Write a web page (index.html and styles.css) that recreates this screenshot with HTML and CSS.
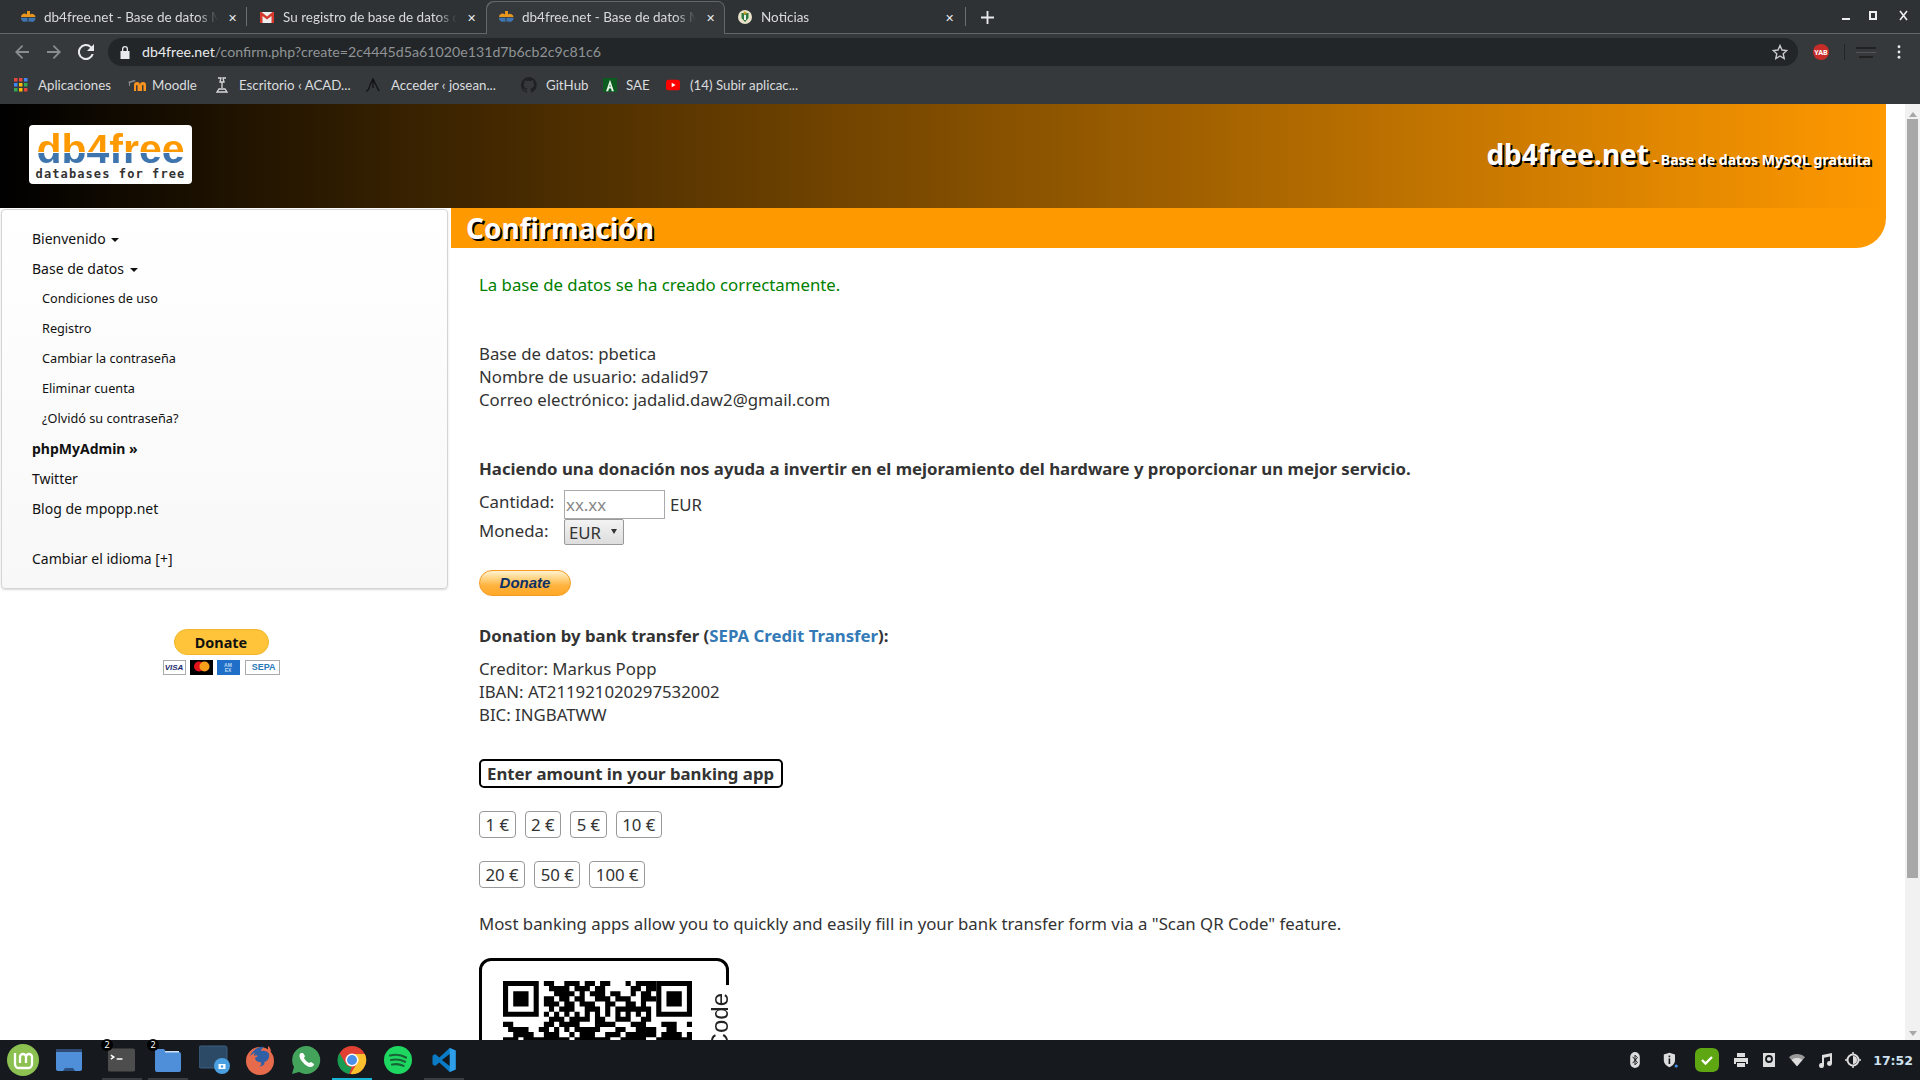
FILE: index.html
```html
<!DOCTYPE html>
<html lang="es">
<head>
<meta charset="utf-8">
<title>db4free.net - Base de datos MySQL gratuita</title>
<link rel="stylesheet" href="styles.css">
</head>
<body>
<div class="screen">
  <div class="tabstrip">
    <div class="tab">
      <svg class="fav" viewBox="0 0 16 16"><path d="M1 8a3.500 3.500 0 0 1 6-2.500V2h1.500v6zM8.500 8V2H10v3.500A3.500 3.500 0 0 1 15.500 8z" fill="#e8971e"/><path d="M1 8.800h6.500v4H6.300v-.6A3.500 3.500 0 0 1 1 8.800zM8.500 8.800h7a3.500 3.500 0 0 1-5.500 3.400v.6H8.500z" fill="#3f75ae"/></svg>
      <span class="tab-title">db4free.net - Base de datos M</span>
      <span class="tab-x">✕</span>
    </div>
    <div class="tab tab-sep">
      <svg class="fav" viewBox="0 0 16 16"><rect x="1" y="3" width="14" height="11" fill="#eee"/><path d="M1 3v11h2.500V7L8 10.500 12.500 7v7H15V3h-1.500L8 7.500 2.500 3z" fill="#d6382b"/></svg>
      <span class="tab-title">Su registro de base de datos c</span>
      <span class="tab-x">✕</span>
    </div>
    <div class="tab tab-active">
      <svg class="fav" viewBox="0 0 16 16"><path d="M1 8a3.500 3.500 0 0 1 6-2.500V2h1.500v6zM8.500 8V2H10v3.500A3.500 3.500 0 0 1 15.500 8z" fill="#e8971e"/><path d="M1 8.800h6.500v4H6.300v-.6A3.500 3.500 0 0 1 1 8.800zM8.500 8.800h7a3.500 3.500 0 0 1-5.500 3.400v.6H8.500z" fill="#3f75ae"/></svg>
      <span class="tab-title">db4free.net - Base de datos M</span>
      <span class="tab-x">✕</span>
    </div>
    <div class="tab tab-last">
      <svg class="fav" viewBox="0 0 16 16"><circle cx="8" cy="8" r="7" fill="#e7e2c8"/><path d="M4.500 4h7v5L8 13 4.500 9z" fill="#2c7a3d"/><circle cx="8" cy="4" r="1.500" fill="#c9a227"/><path d="M7 6h2v5H7z" fill="#eee"/></svg>
      <span class="tab-title">Noticias</span>
      <span class="tab-x">✕</span>
    </div>
    <svg class="newtab" viewBox="0 0 14 14"><path d="M6 0h2v6h6v2H8v6H6V8H0V6h6z" fill="#e8eaed"/></svg>
    <div class="winctl">
      <span class="win-min"></span>
      <span class="win-max"></span>
      <svg class="win-close" viewBox="0 0 9 11"><path d="M1 1l7 9M8 1l-7 9" stroke="#eee" stroke-width="1.600" fill="none"/></svg>
    </div>
  </div>

  <div class="toolbar">
    <svg class="nav-ico" viewBox="0 0 16 16"><path d="M15 7H4.500l4.700-4.800L8 1 1 8l7 7 1.200-1.200L4.500 9H15z" fill="#8a8d90"/></svg>
    <svg class="nav-ico" viewBox="0 0 16 16"><path d="M1 7h10.500L6.800 2.200 8 1l7 7-7 7-1.200-1.200L11.500 9H1z" fill="#8a8d90"/></svg>
    <svg class="nav-ico" viewBox="0 0 16 16"><path d="M13.600 2.400A8 8 0 1 0 15.700 10h-2.100a6 6 0 1 1-1.400-6.200L9 7h7V0z" fill="#e8eaed"/></svg>
    <div class="omnibox">
      <svg class="lock" viewBox="0 0 12 14"><path d="M3 6V4a3 3 0 0 1 6 0v2h1.500v8h-9V6zm1.300 0h3.400V4a1.700 1.700 0 0 0-3.400 0z" fill="#e8eaed"/></svg>
      <span class="url"><span class="url-host">db4free.net</span>/confirm.php?create=2c4445d5a61020e131d7b6cb2c9c81c6</span>
      <svg class="star" viewBox="0 0 16 16"><path d="M8 1.500l2 4.500 4.800.5-3.600 3.200 1 4.800L8 12l-4.200 2.500 1-4.800L1.200 6.500 6 6z" fill="none" stroke="#c8cacc" stroke-width="1.400"/></svg>
    </div>
    <div class="yab"><span>YAB</span></div>
    <div class="tool-sep"></div>
    <div class="profile"><span></span><span></span><span></span></div>
    <svg class="dots" viewBox="0 0 4 16"><circle cx="2" cy="2" r="1.600" fill="#e8eaed"/><circle cx="2" cy="8" r="1.600" fill="#e8eaed"/><circle cx="2" cy="14" r="1.600" fill="#e8eaed"/></svg>
  </div>

  <div class="bookmarks">
    <a class="bm bm-apps"><svg viewBox="0 0 14 14" class="bm-ico"><g><rect width="3.500" height="3.500" fill="#e8453c"/><rect x="5" width="3.500" height="3.500" fill="#e8453c"/><rect x="10" width="3.500" height="3.500" fill="#4285f4"/><rect y="5" width="3.500" height="3.500" fill="#4285f4"/><rect x="5" y="5" width="3.500" height="3.500" fill="#fbbc05"/><rect x="10" y="5" width="3.500" height="3.500" fill="#34a853"/><rect y="10" width="3.500" height="3.500" fill="#34a853"/><rect x="5" y="10" width="3.500" height="3.500" fill="#fbbc05"/><rect x="10" y="10" width="3.500" height="3.500" fill="#e8453c"/></g></svg>Aplicaciones</a>
    <a class="bm bm-moodle"><svg viewBox="0 0 18 14" class="bm-ico"><path d="M6 13V7a3 3 0 0 1 6 0v6H9.500V7.500a.8.8 0 0 0-1.500 0V13zM12 13V7a3 3 0 0 1 6 0v6h-2.500V7.500a.8.8 0 0 0-1.500 0V13z" fill="#f7931e"/><path d="M0 4l6-2 2 1-6 2v3H1V5z" fill="#8a8d90"/></svg>Moodle</a>
    <a class="bm bm-acad"><svg viewBox="0 0 14 16" class="bm-ico"><path d="M3 1h3l-1 4h4L8 1h3M7 5v6M2 15h10l-2-3H4z" stroke="#d8d8d8" stroke-width="1.300" fill="none"/></svg>Escritorio ‹ ACAD...</a>
    <a class="bm bm-acc"><svg viewBox="0 0 16 16" class="bm-ico"><path d="M1 14c3 0 3-3 4-6l3-6 3 6 3 6M8 2v9" stroke="#111" stroke-width="1.300" fill="none"/></svg>Acceder ‹ josean...</a>
    <a class="bm bm-git"><svg viewBox="0 0 16 16" class="bm-ico"><path d="M8 0a8 8 0 0 0-2.500 15.600c.4.100.5-.2.500-.4v-1.400c-2.200.5-2.700-1-2.700-1-.4-.9-.9-1.200-.9-1.200-.7-.5.100-.5.100-.5.800.100 1.200.8 1.200.8.700 1.200 1.900.9 2.300.7.100-.5.300-.9.500-1.100-1.800-.2-3.700-.9-3.700-4 0-.9.300-1.600.8-2.100-.1-.2-.4-1 .1-2.100 0 0 .7-.2 2.200.8a7.600 7.600 0 0 1 4 0c1.500-1 2.200-.8 2.200-.8.400 1.100.2 1.900.1 2.100.5.600.8 1.300.8 2.100 0 3.100-1.900 3.700-3.700 3.900.3.300.6.800.6 1.500v2.200c0 .2.100.5.600.4A8 8 0 0 0 8 0z" fill="#202124"/></svg>GitHub</a>
    <a class="bm bm-sae"><svg viewBox="0 0 16 16" class="bm-ico"><rect width="16" height="16" fill="#0c5c20"/><path d="M8 2l4.500 13H10l-.8-3H6.800L6 15H3.500zm0 5l-.7 3h1.400z" fill="#e9f4ea"/></svg>SAE</a>
    <a class="bm bm-yt"><svg viewBox="0 0 16 16" class="bm-ico"><rect y="2" width="16" height="12" rx="3" fill="#f00"/><path d="M6.500 5.500L11 8l-4.500 2.500z" fill="#fff"/></svg>(14) Subir aplicac...</a>
  </div>

  <div class="viewport">
    <div class="page">
      <header class="site-head">
        <div class="logo">
          <span class="logo-big">db4free</span>
          <span class="logo-small">databases for free</span>
        </div>
        <div class="site-title"><span class="site-name">db4free.net</span><span class="site-sub"> - Base de datos MySQL gratuita</span></div>
      </header>
      <div class="columns">
        <aside class="side">
          <nav class="menu">
            <a class="item">Bienvenido <i class="caret"></i></a>
            <a class="item">Base de datos <i class="caret"></i></a>
            <a class="item sub">Condiciones de uso</a>
            <a class="item sub">Registro</a>
            <a class="item sub">Cambiar la contraseña</a>
            <a class="item sub">Eliminar cuenta</a>
            <a class="item sub">¿Olvidó su contraseña?</a>
            <a class="item strong">phpMyAdmin »</a>
            <a class="item">Twitter</a>
            <a class="item">Blog de mpopp.net</a>
            <a class="item lang">Cambiar el idioma [+]</a>
          </nav>
          <div class="side-donate">
            <span class="pp-yellow">Donate</span>
            <div class="cards">
              <span class="card card-visa">VISA</span>
              <svg class="card-mc" viewBox="0 0 23 15"><rect width="23" height="15" fill="#000"/><circle cx="9" cy="6.500" r="5" fill="#e3131b"/><circle cx="14.500" cy="6.500" r="5" fill="#f79e1b"/></svg>
              <span class="card card-amex">AM<br>EX</span>
              <span class="card card-sepa">SEPA</span>
            </div>
          </div>
        </aside>
        <main class="content">
          <h2 class="bar">Confirmación</h2>
          <div class="inner">
            <p class="ok">La base de datos se ha creado correctamente.</p>
            <p class="gap">Base de datos: pbetica<br>Nombre de usuario: adalid97<br>Correo electrónico: jadalid.daw2@gmail.com</p>
            <p class="gap"><b>Haciendo una donación nos ayuda a invertir en el mejoramiento del hardware y proporcionar un mejor servicio.</b></p>
            <form class="amount">
              <label class="lbl">Cantidad:</label>
              <div class="field"><input class="inp" type="text" placeholder="xx.xx"><span class="cur">EUR</span></div>
              <label class="lbl">Moneda:</label>
              <div class="field"><div class="sel">EUR<i class="sel-arrow"></i></div></div>
            </form>
            <span class="pp-orange">Donate</span>
            <p class="bank-h"><b>Donation by bank transfer (<a class="link">SEPA Credit Transfer</a>):</b></p>
            <p class="bank">Creditor: Markus Popp<br>IBAN: AT211921020297532002<br>BIC: INGBATWW</p>
            <div class="enter"><b>Enter amount in your banking app</b></div>
            <div class="amts"><span class="amt">1 €</span><span class="amt">2 €</span><span class="amt">5 €</span><span class="amt">10 €</span></div>
            <div class="amts amts2"><span class="amt">20 €</span><span class="amt">50 €</span><span class="amt">100 €</span></div>
            <p class="scan">Most banking apps allow you to quickly and easily fill in your bank transfer form via a "Scan QR Code" feature.</p>
            <div class="qr">
              <svg class="qr-code" viewBox="0 0 37 37">
                <path fill-rule="evenodd" d="M0 0h7v7H0zM1 1v5h5V1zM2 2h3v3H2zM30 0h7v7h-7zM31 1v5h5V1zM32 2h3v3h-3z"/>
                <path stroke="#000" fill="none" d="M8 .5h2M12 .5h3M16 .5h2M19 .5h2M24 .5h1M26 .5h4M9 1.500h2M11 1.500h2M14 1.500h3M18 1.500h2M25 1.500h2M28 1.500h2M10 2.500h4M15 2.500h1M17 2.500h3M21 2.500h2M25 2.500h1M27 2.500h2M8 3.500h2M11 3.500h2M14 3.500h2M18 3.500h3M22 3.500h3M27 3.500h3M8 4.500h3M12 4.500h2M15 4.500h3M20 4.500h2M24 4.500h2M27 4.500h1M9 5.500h1M11 5.500h3M16 5.500h3M20 5.500h1M22 5.500h4M26 5.500h3M8 6.500h1M10 6.500h1M12 6.500h1M14 6.500h1M16 6.500h1M18 6.500h1M20 6.500h1M22 6.500h1M24 6.500h1M26 6.500h1M28 6.500h1M9 7.500h3M13 7.500h4M18 7.500h2M22 7.500h3M27 7.500h2M0 8.500h2M8 8.500h2M11 8.500h4M18 8.500h4M25 8.500h3M31 8.500h3M36 8.500h1M1 9.500h4M7 9.500h2M10 9.500h1M12 9.500h1M14 9.500h5M22 9.500h2M26 9.500h4M32 9.500h2M2 10.500h4M8 10.500h3M13 10.500h1M15 10.500h3M20 10.500h3M24 10.500h6M31 10.500h4M36 10.500h1M0 11.500h3M4 11.500h3M7 11.500h6M14 11.500h7M23 11.500h5M30 11.500h7"/>
              </svg>
              <span class="qr-label">QR Code</span>
            </div>
          </div>
        </main>
      </div>
    </div>
    <div class="scrollbar">
      <i class="sb-up"></i>
      <div class="sb-thumb"></div>
      <i class="sb-down"></i>
    </div>
  </div>

  <footer class="taskbar">
    <div class="task-left">
      <div class="ti"><svg viewBox="0 0 32 32" class="ti-32"><circle cx="16" cy="16" r="16" fill="#8cc152"/><path d="M8 9v11a4 4 0 0 0 4 4h9a4 4 0 0 0 4-4v-7a3 3 0 0 0-6 0v6M13 19v-6a3 3 0 0 1 6 0" fill="none" stroke="#fff" stroke-width="2.300"/></svg></div>
      <div class="ti"><svg viewBox="0 0 26 24" class="ti-26"><rect y="1" width="26" height="22" rx="2" fill="#4f8ed8"/><rect y="1" width="26" height="3" fill="#2e4a70"/><path d="M7 23l2-3h8l2 3z" fill="#2b4f80"/></svg></div>
      <div class="ti ti-term"><span class="badge">2</span><svg viewBox="0 0 28 24" class="ti-28"><rect width="28" height="24" rx="2" fill="#4d4d4d"/><path d="M3 7l3 2-3 2M9 11h6" stroke="#fff" stroke-width="1.500" fill="none"/></svg></div>
      <div class="ti ti-files"><span class="badge">2</span><svg viewBox="0 0 26 24" class="ti-26"><path d="M0 3a2 2 0 0 1 2-2h7l2 3h13a2 2 0 0 1 2 2v16a2 2 0 0 1-2 2H2a2 2 0 0 1-2-2z" fill="#4f8ed8"/><rect x="10" y="3" width="14" height="1.500" fill="#cfe0f5"/></svg></div>
      <div class="ti ti-shot"><svg viewBox="0 0 32 28" class="ti-32"><rect width="28" height="22" rx="2" fill="#2c4a66" stroke="#3c5f80"/><circle cx="23" cy="20" r="8" fill="#4a9fe0"/><rect x="19.500" y="18" width="7" height="5" fill="#fff"/><circle cx="23" cy="20.500" r="1.300" fill="#4a9fe0"/></svg></div>
      <div class="ti ti-fox"><svg viewBox="0 0 32 32" class="ti-32"><circle cx="16" cy="17" r="14" fill="#e66b4c"/><path d="M6 12c3-7 10-10 14-9-2 1-3 3-3 4 3-1 7 0 8 3 1 4-2 8-5 8 2 2-2 5-5 4 3 0 3-3 1-4-3 0-5-2-5-4l3-2c-1-1-3-1-4 0 0-1 0-2 1-3-2 0-3 2-5 3z" fill="#2f5fa5"/><path d="M24 2c2 1 3 4 3 6l-3-2z" fill="#e66b4c"/></svg></div>
      <div class="ti"><svg viewBox="0 0 30 30" class="ti-30"><path d="M15 1a14 14 0 0 0-12 21L1 29l7-2A14 14 0 1 0 15 1z" fill="#43a35a"/><path d="M10 8c-2 1-2 4 0 7s6 7 9 7 4-2 4-3l-3-2-2 1c-2-1-4-3-5-5l1-2-2-3z" fill="#fff"/></svg></div>
      <div class="ti"><svg viewBox="0 0 30 30" class="ti-30"><circle cx="15" cy="15" r="14" fill="#e24033"/><path d="M27.800 9H15a6 6 0 0 1 5.200 9L13.500 29A14 14 0 0 0 27.800 9z" fill="#fbc02d"/><path d="M2.500 8L9 19.500a6 6 0 0 0 6 2L12 29A14 14 0 0 1 2.500 8z" fill="#179c52"/><circle cx="15" cy="15" r="6.500" fill="#fff"/><circle cx="15" cy="15" r="5" fill="#4a8fe8"/></svg></div>
      <div class="ti"><svg viewBox="0 0 30 30" class="ti-30"><circle cx="15" cy="15" r="14" fill="#1ed760"/><path d="M7 10.500c6-1.500 11-1 16 2M8 15c5-1 9-.8 14 1.800M9 19.500c4-.8 8-.6 11.500 1.400" stroke="#14181c" stroke-opacity=".6" stroke-width="2.200" fill="none" stroke-linecap="round"/></svg></div>
      <div class="ti"><svg viewBox="0 0 28 28" class="ti-28"><path d="M20 0l7 3v22l-7 3L8 17l-5 4-3-2v-10l3-2 5 4z" fill="#0a7bc4"/><path d="M20 0l7 3v22l-7 3z" fill="#2e9ee8"/><path d="M20 7L11 14l9 7z" fill="#14181c"/></svg></div>
      <i class="run run-a"></i><i class="run run-b"></i><i class="run run-c"></i><i class="run run-d"></i>
    </div>
    <div class="tray">
      <svg class="tr tr-bt" viewBox="0 0 14 20"><rect width="12" height="20" x="1" rx="6" fill="#ddd"/><path d="M4 6l6 7-3 3V4l3 3-6 7" stroke="#14181c" stroke-width="1.200" fill="none"/></svg>
      <svg class="tr" viewBox="0 0 20 20"><path d="M8 1l7 2v7c0 5-4 8-7 9-3-1-7-4-7-9V3z" fill="#ddd"/><rect x="7" y="8" width="2" height="7" fill="#14181c"/><rect x="7" y="4.500" width="2" height="2" fill="#14181c"/><circle cx="16.500" cy="17.500" r="2" fill="#4a8fe8"/></svg>
      <svg class="tr tr-skype" viewBox="0 0 24 24"><path d="M7 0h10c5 0 7 3 7 7v10c0 5-3 7-7 7H7c-5 0-7-3-7-7V7c0-5 3-7 7-7z" fill="#5fa613"/><path d="M7 12l3.500 3.500L17 9" stroke="#fff" stroke-width="2.400" fill="none"/></svg>
      <svg class="tr" viewBox="0 0 16 14"><path d="M4 0h8v4H4zM1 5h14v6h-2V9H3v2H1zM4 10h8v4H4z" fill="#ddd"/></svg>
      <svg class="tr" viewBox="0 0 14 16"><rect width="12" height="14" x="1" y="1" fill="#ddd"/><circle cx="7" cy="7" r="3" fill="none" stroke="#14181c" stroke-width="1.800"/></svg>
      <svg class="tr" viewBox="0 0 18 14"><path d="M0 4C5-1 13-1 18 4l-9 10z" fill="#9a9a9a"/><path d="M3 7c3-3 9-3 12 0l-6 7z" fill="#ddd"/></svg>
      <svg class="tr" viewBox="0 0 16 16"><path d="M5 3l10-2v10.500a2.500 2.500 0 1 1-2-2.400V4.500L7 5.700v7.800a2.500 2.500 0 1 1-2-2.400z" fill="#ddd"/></svg>
      <svg class="tr" viewBox="0 0 16 16"><circle cx="8" cy="8" r="5.500" fill="none" stroke="#ddd" stroke-width="2"/><path d="M8 4a4 4 0 0 1 0 8z" fill="#ddd"/><path d="M8 0v2M8 14v2M0 8h2M14 8h2" stroke="#ddd" stroke-width="1.500"/></svg>
      <span class="clock">17:52</span>
    </div>
  </footer>
</div>
</body>
</html>
```

FILE: styles.css
```css
* { box-sizing: border-box; }
html, body { margin: 0; height: 100%; overflow: hidden; }
body { font-family: "Noto Sans", sans-serif; font-size: 16.800px; line-height: 23px; color: #333; background: #fff; }
svg { display: block; flex: none; }

.screen { display: flex; flex-direction: column; width: 1920px; height: 1080px; }

/* browser chrome */
.tabstrip { position: relative; display: flex; align-items: stretch; height: 34px; padding: 1px 0 0 8px; background: #2e3235; border-bottom: 1px solid #63676a; font-family: Lato, "Noto Sans", sans-serif; font-size: 13.500px; color: #d8dadc; }
.tab { display: flex; align-items: center; width: 239px; height: 32px; padding: 0 7px 0 12px; position: relative; }
.tab-sep::after { content: ""; position: absolute; left: -1px; top: 6px; bottom: 7px; width: 1px; background: #6a6e71; }
.tab-active { background: #35393c; box-shadow: inset 1px 1px 0 #63676a, inset -1px 0 0 #63676a; border-radius: 8px 8px 0 0; height: 33px; padding-bottom: 1px; }
.tab-last::after { content: ""; position: absolute; right: -2px; top: 6px; bottom: 7px; width: 1px; background: #6a6e71; }
.fav { width: 16px; height: 16px; margin-right: 8px; }
.tab-title { flex: 1; white-space: nowrap; overflow: hidden; -webkit-mask-image: linear-gradient(to right, #000 88%, transparent); mask-image: linear-gradient(to right, #000 88%, transparent); }
.tab-x { width: 16px; margin-left: 6px; font-size: 11px; text-align: center; color: #e8eaed; }
.newtab { width: 13px; height: 13px; margin: 10px 0 0 17px; }
.winctl { display: flex; align-items: center; gap: 19px; margin-left: auto; padding: 0 12px 3px 0; }
.win-min { width: 8px; height: 2px; margin-top: 6px; background: #eee; }
.win-max { width: 8px; height: 9px; border: 2px solid #eee; }
.win-close { width: 9px; height: 11px; margin-left: 3px; }

.toolbar { display: flex; align-items: center; height: 36px; background: #35393c; padding: 0 0 0 14px; }
.nav-ico { width: 16px; height: 16px; margin-right: 16px; }
.omnibox { display: flex; align-items: center; width: 1690px; height: 28px; margin-left: -2px; padding: 0 10px 0 11px; background: #232628; border-radius: 14px; }
.lock { width: 12px; height: 14px; }
.url { flex: 1; margin-left: 11px; padding-bottom: 2px; color: #8f9396; white-space: nowrap; font-family: Lato, "Noto Sans", sans-serif; font-size: 14.200px; }
.url-host { color: #e8eaed; }
.star { width: 16px; height: 16px; }
.yab { display: flex; align-items: center; justify-content: center; width: 16px; height: 16px; margin-left: 15px; border-radius: 50%; background: #c62d28; }
.yab span { color: #fff; font-size: 7px; font-weight: 700; }
.tool-sep { width: 1px; height: 16px; margin-left: 15px; background: #232628; }
.profile { display: flex; flex-direction: column; gap: 3px; width: 22px; margin-left: 10px; align-items: center; }
.profile span { display: block; width: 20px; height: 2px; background: #222; }
.profile span:nth-child(2) { height: 1px; background: #555; }
.profile span:last-child { width: 14px; }
.dots { width: 4px; height: 14px; margin-left: 20px; }

.bookmarks { display: flex; align-items: center; height: 34px; padding: 0 0 4px 14px; background: #35393c; font-family: Lato, "Noto Sans", sans-serif; font-size: 13.300px; color: #dadcde; }
.bm { display: flex; align-items: center; white-space: nowrap; }
.bm-ico { width: 14px; height: 14px; margin-right: 9px; }
.bm-apps .bm-ico { margin-right: 10px; }
.bm-apps { width: 114px; }
.bm-moodle { width: 86px; }
.bm-moodle .bm-ico { width: 18px; margin-right: 6px; }
.bm-acad { width: 151px; }
.bm-acad .bm-ico, .bm-acc .bm-ico, .bm-git .bm-ico { width: 16px; height: 16px; }
.bm-acad .bm-ico { margin-right: 9px; }
.bm-acc { width: 156px; }
.bm-acc .bm-ico { margin-right: 10px; }
.bm-git { width: 82px; }
.bm-sae { width: 63px; }
.bm-yt .bm-ico { margin-right: 10px; }

/* page */
.viewport { display: flex; flex: 1; min-height: 0; }
.page { flex: 1; min-width: 0; overflow: hidden; }
.site-head { display: flex; justify-content: space-between; height: 104px; margin-right: 19px; padding: 21px 15px 0 29px; background: linear-gradient(to right, #000, #f90); }
.logo { display: flex; flex-direction: column; align-items: center; width: 163px; height: 59px; padding-top: 5px; background: #fff; border-radius: 4px; }
.logo-big { font-family: "Liberation Sans", sans-serif; font-size: 41px; font-weight: 700; line-height: 38px; height: 38px; background: linear-gradient(to bottom, #f90 0, #f90 58%, #fff 58%, #fff 61%, #3e75ae 61%, #3e75ae 100%); -webkit-background-clip: text; background-clip: text; color: transparent; }
.logo-small { font-family: "DejaVu Sans Mono", monospace; font-size: 12px; font-weight: 700; line-height: 13px; letter-spacing: 1.100px; color: #333; white-space: nowrap; }
.site-title { color: #fff; padding-top: 15px; line-height: 23px; text-shadow: 2px 2px 0 #000; white-space: nowrap; }
.site-name { font-size: 28px; font-weight: 700; line-height: 1; }
.site-sub { font-size: 14.100px; font-weight: 700; }

.columns { display: flex; }
.side { width: 451px; flex: none; }
.menu { display: flex; flex-direction: column; width: 447px; margin: 1px 0 0 1px; padding: 13px 0 15px; background: linear-gradient(to bottom, #fff, #f8f8f8); border: 1px solid #d4d4d4; border-radius: 4px; box-shadow: 0 1px 2px rgba(0,0,0,.15); }
.item { display: flex; align-items: center; height: 30px; padding-left: 30px; font-size: 14px; color: #111; white-space: pre; }
.sub { padding-left: 40px; font-size: 12.700px; }
.strong { font-weight: 700; }
.lang { margin-top: 20px; }
.caret { display: inline-block; width: 0; height: 0; margin: 3px 0 0 2px; border-left: 4px solid transparent; border-right: 4px solid transparent; border-top: 4px solid #111; }
.side-donate { display: flex; flex-direction: column; align-items: center; margin-top: 40px; padding-right: 9px; }
.pp-yellow { display: flex; align-items: center; justify-content: center; width: 95px; height: 26px; background: #ffc439; border: 1px solid #f0b528; border-radius: 13px; font-size: 14.400px; font-weight: 700; color: #111; }
.cards { display: flex; gap: 4px; margin-top: 5px; }
.card { display: flex; align-items: center; justify-content: center; height: 15px; font-family: "Liberation Sans", sans-serif; font-size: 8px; font-weight: 700; line-height: 5px; }
.card-visa { width: 23px; background: #fff; border: 1px solid #aaa; color: #1a2a6c; font-style: italic; }
.card-mc { width: 23px; height: 15px; }
.card-amex { width: 23px; background: #1f6fc9; color: #bcd6f2; font-size: 5px; text-align: center; }
.card-sepa { width: 35px; margin-left: 1px; background: #fff; border: 1px solid #aaa; color: #2a7ab8; justify-content: flex-end; padding-right: 3px; font-size: 9px; }

.content { flex: 1; min-width: 0; margin-right: 19px; }
.bar { height: 40px; margin: 0; padding-left: 15px; background: #f90; border-radius: 0 0 30px 0; color: #fff; font-size: 28px; font-weight: 700; line-height: 41px; text-shadow: 2px 2px 0 #000; }
.inner { padding: 25px 0 0 28px; }
.inner p { margin: 0; }
.ok { color: #008000; }
.inner .gap { margin-top: 46px; }
.amount { display: grid; grid-template-columns: 85px 1fr; margin-top: 10px; }
.field { display: flex; align-items: center; }
.inp { width: 101px; height: 29px; padding: 1px; border: 1px solid #aaa; font: 16.800px "Noto Sans", sans-serif; color: #333; background: #fff; }
.inp::placeholder { color: #888; opacity: 1; }
.cur { margin-left: 5px; }
.sel { position: relative; width: 60px; height: 26px; padding-left: 4px; line-height: 26px; background: linear-gradient(to bottom, #f3f3f3, #ddd); border: 1px solid #999; border-radius: 2px; }
.sel-arrow { position: absolute; right: 6px; top: 9px; width: 0; height: 0; border-left: 3px solid transparent; border-right: 3px solid transparent; border-top: 5px solid #333; }
.pp-orange { display: block; width: 92px; height: 26px; margin-top: 25px; border: 1px solid #f59b25; border-radius: 13px; background: linear-gradient(to bottom, #fff3d0 0, #ffd07a 35%, #ffb340 60%, #ffa826 100%); font-family: "Liberation Sans", sans-serif; font-size: 15px; font-style: italic; font-weight: 700; line-height: 24px; text-align: center; color: #0c3166; }
.inner .bank-h { margin-top: 28px; }
.link { color: #337ab7; }
.inner .bank { margin-top: 10px; }
.enter { width: 304px; height: 29px; margin-top: 33px; padding-left: 6px; border: 2px solid #000; border-radius: 5px; line-height: 25px; white-space: nowrap; }
.amts { display: flex; gap: 9px; margin-top: 23px; }
.amt { height: 27px; padding: 0 5.500px; border: 1px solid #999; border-radius: 4px; line-height: 25px; white-space: nowrap; }
.inner .scan { margin-top: 24px; }
.qr { position: relative; width: 250px; height: 250px; margin-top: 23px; border: 3px solid #000; border-radius: 12px; }
.qr-code { width: 189px; height: 189px; margin: 20px 0 0 21px; }
.qr-label { position: absolute; right: -3px; top: 24px; padding: 8px 0; background: #fff; font-family: "Liberation Sans", sans-serif; font-size: 24px; line-height: 18px; color: #222; writing-mode: vertical-rl; transform: rotate(180deg); white-space: nowrap; }

.scrollbar { display: flex; flex-direction: column; align-items: center; width: 15px; padding: 8px 0 4px; background: #f1f1f1; }
.sb-up { width: 0; height: 0; border-left: 4px solid transparent; border-right: 4px solid transparent; border-bottom: 5px solid #a8a8a8; }
.sb-thumb { width: 11px; height: 759px; margin-top: 2px; margin-bottom: auto; background: #a8a8a8; }
.sb-down { width: 0; height: 0; border-left: 4px solid transparent; border-right: 4px solid transparent; border-top: 5px solid #a8a8a8; }

/* desktop panel */
.taskbar { display: flex; justify-content: space-between; align-items: center; height: 40px; flex: none; background: #161a1f; }
.task-left { position: relative; display: flex; align-items: center; height: 40px; }
.ti { position: relative; display: flex; align-items: center; justify-content: center; width: 46px; height: 40px; }
.ti-32 { width: 32px; height: 32px; }
.ti-30 { width: 30px; height: 30px; }
.ti-28 { width: 27px; height: 24px; }
.ti-26 { width: 26px; height: 24px; }
.ti-term { margin-left: 6px; }
.ti-files { margin-left: 1px; }
.ti-shot { margin-left: 1px; }
.ti-fox { margin-left: -1px; }
.badge { position: absolute; left: 0; top: -1px; z-index: 1; width: 12px; height: 12px; border-radius: 50%; background: #000; color: #fff; font-size: 9px; line-height: 12px; text-align: center; }
.ti-term .badge { left: 3px; }
.ti-files .badge { left: 2px; }
.run { position: absolute; bottom: 0; width: 40px; height: 2px; background: #3a3e42; }
.run-a { left: 102px; }
.run-b { left: 148px; }
.run-c { left: 332px; background: #17b6d6; }
.run-d { left: 424px; }
.tray { display: flex; align-items: center; height: 40px; padding-right: 7px; }
.tr { width: 16px; height: 16px; margin-right: 12px; }
.tr-bt { margin-right: 20px; }
.tr-skype { width: 24px; height: 24px; margin: 0 14px 0 4px; }
.clock { font-family: "DejaVu Sans", sans-serif; font-size: 12.500px; font-weight: 700; color: #cfe0ef; }
```
